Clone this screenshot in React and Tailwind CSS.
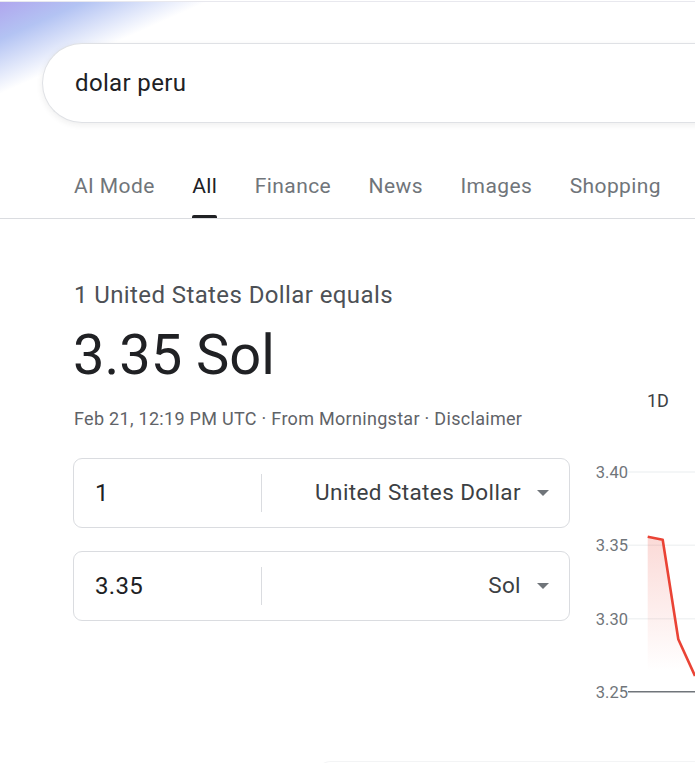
import React from "react"

const tabs = ["AI Mode", "All", "Finance", "News", "Images", "Shopping"]

function Caret(){
return(
<svg width="12" height="6" viewBox="0 0 12 6" className="shrink-0">
<path d="M0 0 L12 0 L6 6 Z" fill="#70757a"/>
</svg>
)
}

function ConverterBox({value,currency}){
return(
<div className="flex items-center h-[70px] w-[497px] rounded-[9px] border border-[#dadce0] bg-white">
<div className="w-[187px] pl-[21px] text-[24px] tracking-[0.3px] text-[#202124]">{value}</div>
<div className="h-[38px] w-px bg-[#dadce0]"/>
<div className="flex flex-1 items-center justify-end gap-[16px] pr-[20px]">
<span className="text-[22.5px] tracking-[0.4px] text-[#3c4043]">{currency}</span>
<Caret/>
</div>
</div>
)
}

function Chart(){
const line = "77.7,155.7 92.7,158.7 108.3,258.3 125,295"
return(
<svg width="125" height="330" viewBox="0 0 125 330" className="block">
<defs>
<linearGradient id="fillRed" x1="0" y1="155" x2="0" y2="290" gradientUnits="userSpaceOnUse">
<stop offset="0" stopColor="#ea4335" stopOpacity="0.2"/>
<stop offset="1" stopColor="#ea4335" stopOpacity="0"/>
</linearGradient>
</defs>
<text x="77" y="26" fontSize="18" fill="#3c4043" fontFamily="Roboto, sans-serif">1D</text>
{[[91,"3.40"],[164.3,"3.35"],[237.7,"3.30"]].map(([y,l])=>(
<g key={l}>
<line x1="58" x2="125" y1={y} y2={y} stroke="#f1f3f4" strokeWidth="1.5"/>
<text x="58" y={y+6} fontSize="16.5" textAnchor="end" fill="#70757a" fontFamily="Roboto, sans-serif">{l}</text>
</g>
))}
<polygon points={`77.7,300 ${line} 125,300`} fill="url(#fillRed)"/>
<polyline points={line} fill="none" stroke="#ea4335" strokeWidth="2.6" strokeLinejoin="round"/>
<line x1="58" x2="125" y1="310.7" y2="310.7" stroke="#70757a" strokeWidth="1.5"/>
<text x="58" y="316.5" fontSize="16.5" textAnchor="end" fill="#70757a" fontFamily="Roboto, sans-serif">3.25</text>
</svg>
)
}

export default function App(){

return(

<div className="relative h-[763px] w-full overflow-hidden bg-white font-['Roboto',sans-serif]">

{/* HEADER */}

<div className="border-t border-[#e8e8ee] mt-px bg-[linear-gradient(156deg,#b0a6ee_0px,#b3c3f3_34px,rgba(255,255,255,0)_84px)]">

<div className="pt-[41px]">
<div className="ml-[42px] mr-[-40px] flex h-[80px] items-center rounded-l-full border border-r-0 border-[#dfe1e5] bg-white pl-[32px] shadow-[0_2px_6px_rgba(32,33,36,0.08)]">
<span className="text-[24px] tracking-[0.35px] text-[#202124]">dolar peru</span>
</div>
</div>

</div>


{/* TABS */}

<div className="mt-[38px] flex gap-[37.5px] border-b border-[#dadce0] pl-[74px]">
{tabs.map(t=>(
<div key={t} className="flex flex-col items-stretch">
<span className={`whitespace-nowrap text-[21px] tracking-[0.4px] leading-[50px] ${t==="All" ? "text-[#202124]" : "text-[#70757a]"}`}>{t}</span>
<div className={`mt-[4px] h-[3px] rounded-t-[2px] ${t==="All" ? "bg-[#202124]" : "bg-transparent"}`}/>
</div>
))}
</div>


{/* CONVERTER */}

<div className="flex">

<div className="w-[570px] shrink-0 pl-[73px] pt-[62px]">

<div className="pl-px text-[24px] tracking-[0.4px] leading-[28px] text-[#4d5156]">1 United States Dollar equals</div>

<div className="mt-[14px] text-[56px] leading-[64px] text-[#202124]">3.35 Sol</div>

<div className="mt-[20px] pl-px text-[18px] tracking-[0.3px] leading-[24px] text-[#5f6368]">
Feb 21, 12:19 PM UTC · From Morningstar · Disclaimer
</div>

<div className="mt-[27px] flex flex-col gap-[23px]">
<ConverterBox value="1" currency="United States Dollar"/>
<ConverterBox value="3.35" currency="Sol"/>
</div>

</div>

<div className="pt-[162px]">
<Chart/>
</div>

</div>

<div className="mt-[50px] ml-[315px] h-6 rounded-tl-2xl border-t border-l border-[#f3f4f5]"/>

</div>

)

}
